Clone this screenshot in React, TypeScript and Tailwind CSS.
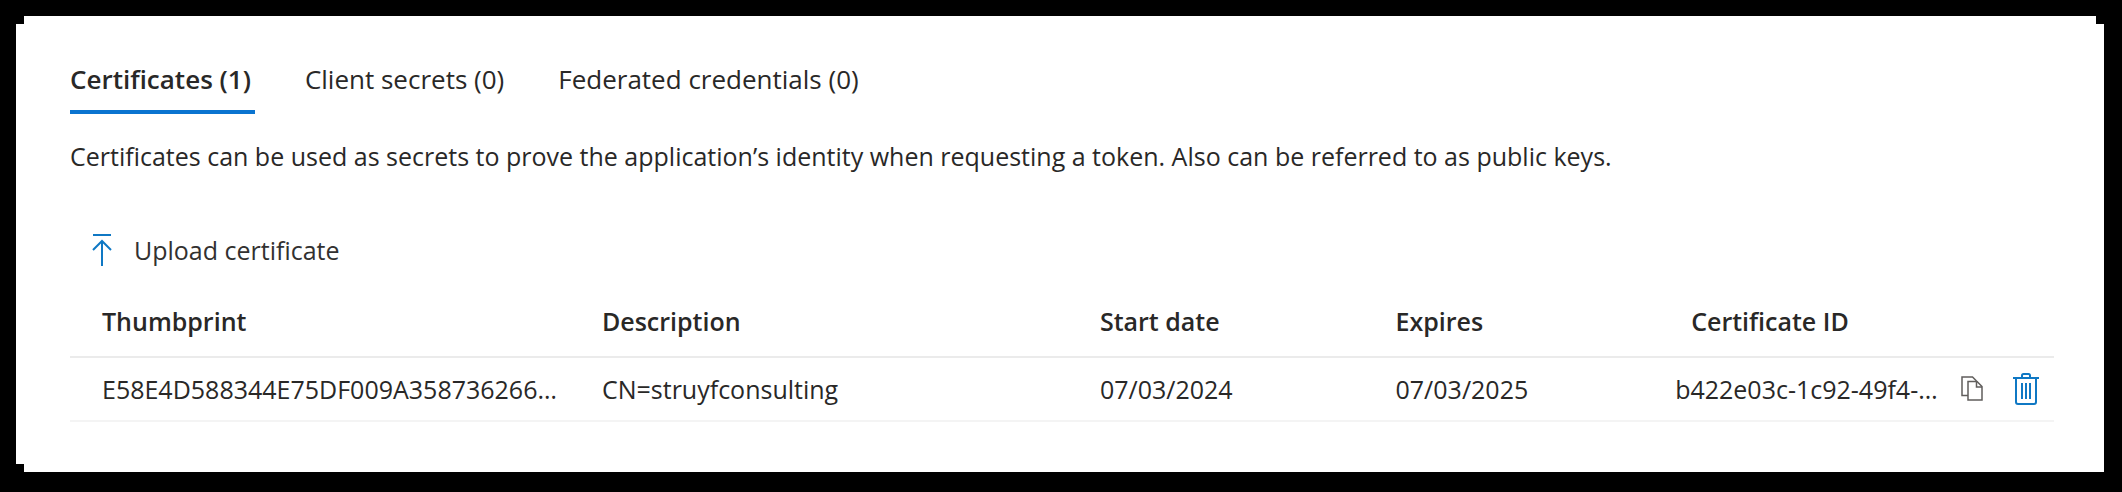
import { useState } from "react";

const tabs = ["Certificates (1)", "Client secrets (0)", "Federated credentials (0)"];

const certificates = [
  {
    thumbprint: "E58E4D588344E75DF009A358736266…",
    description: "CN=struyfconsulting",
    start: "07/03/2024",
    expires: "07/03/2025",
    id: "b422e03c-1c92-49f4-…",
  },
];

function UploadIcon() {
  return (
    <svg width="20" height="32" viewBox="0 0 20 32" fill="none" stroke="#0f78c4" strokeWidth="2" aria-hidden="true">
      <path d="M1 1h18" />
      <path d="M10 32V7.500" />
      <path d="M1 16l9-9 9 9" />
    </svg>
  );
}

function CopyIcon() {
  return (
    <svg width="22" height="26" viewBox="0 0 22 26" fill="none" stroke="#605e5c" strokeWidth="1.500" aria-hidden="true">
      <path d="M7 19.500H1V1h10.500L15.500 5" />
      <path d="M7 5.500h9l5 5V24H7z" />
      <path d="M15.500 5.500V11H21" />
    </svg>
  );
}

function TrashIcon() {
  return (
    <svg width="26" height="32" viewBox="0 0 26 32" fill="none" stroke="#0f78c4" strokeWidth="2" aria-hidden="true">
      <path d="M0 5h26" />
      <path d="M9 5V2.500Q9 1 10.500 1h5Q17 1 17 2.500V5" />
      <path d="M3 5v24q0 2 2 2h16q2 0 2-2V5" />
      <path d="M9 10v16M13 10v16M17 10v16" />
    </svg>
  );
}

export default function App() {
  const [active, setActive] = useState(0);

  return (
    <div className="min-h-screen bg-black pt-4 pr-[18px] pb-5 pl-4">
      <main className="relative bg-white pt-8 pr-[50px] pb-[50px] pl-[54px] font-['Open_Sans','Noto_Sans',sans-serif] text-[25px] leading-[36px] text-[#292827]">
        <span className="absolute top-0 left-0 size-2 bg-black" />
        <span className="absolute top-0 right-0 size-2 bg-black" />
        <span className="absolute bottom-0 left-0 size-2 bg-black" />

        <div role="tablist" className="flex gap-[50px] text-[26px]">
          {tabs.map((tab, i) => (
            <button
              key={tab}
              role="tab"
              aria-selected={i === active}
              onClick={() => setActive(i)}
              className={
                i === active
                  ? "border-b-4 border-[#0a74d0] pt-[13px] pr-1 pb-[13px] font-semibold"
                  : "border-b-4 border-transparent pt-[13px] pr-1 pb-[13px]"
              }
            >
              {tab}
            </button>
          ))}
        </div>

        <p className="mt-6">
          Certificates can be used as secrets to prove the application’s identity when requesting a token. Also can be
          referred to as public keys.
        </p>

        <button className="mt-[58px] ml-[22px] flex items-center gap-[22px] text-[#323130]">
          <UploadIcon />
          Upload certificate
        </button>

        <table className="mt-[17px] w-full table-fixed border-collapse text-left">
          <colgroup>
            <col className="w-[25.2%]" />
            <col className="w-[25.1%]" />
            <col className="w-[14.9%]" />
            <col className="w-[14.9%]" />
            <col />
          </colgroup>
          <thead>
            <tr className="h-[72px] border-b-2 border-[#ebebeb]">
              <th className="pl-8 font-semibold">Thumbprint</th>
              <th className="pl-8 font-semibold">Description</th>
              <th className="pl-8 font-semibold">Start date</th>
              <th className="pl-8 font-semibold">Expires</th>
              <th className="pl-8 font-semibold">Certificate ID</th>
            </tr>
          </thead>
          <tbody>
            {certificates.map((c) => (
              <tr key={c.id} className="h-16 border-b-2 border-[#f4f4f4]">
                <td className="pl-8 whitespace-nowrap">{c.thumbprint}</td>
                <td className="pl-8">{c.description}</td>
                <td className="pl-8">{c.start}</td>
                <td className="pl-8">{c.expires}</td>
                <td className="pr-[15px] pl-4">
                  <div className="flex items-center">
                    <span className="flex-1 whitespace-nowrap">{c.id}</span>
                    <button aria-label="Copy certificate ID" className="mr-[30px]">
                      <CopyIcon />
                    </button>
                    <button aria-label="Delete certificate">
                      <TrashIcon />
                    </button>
                  </div>
                </td>
              </tr>
            ))}
          </tbody>
        </table>
      </main>
    </div>
  );
}
